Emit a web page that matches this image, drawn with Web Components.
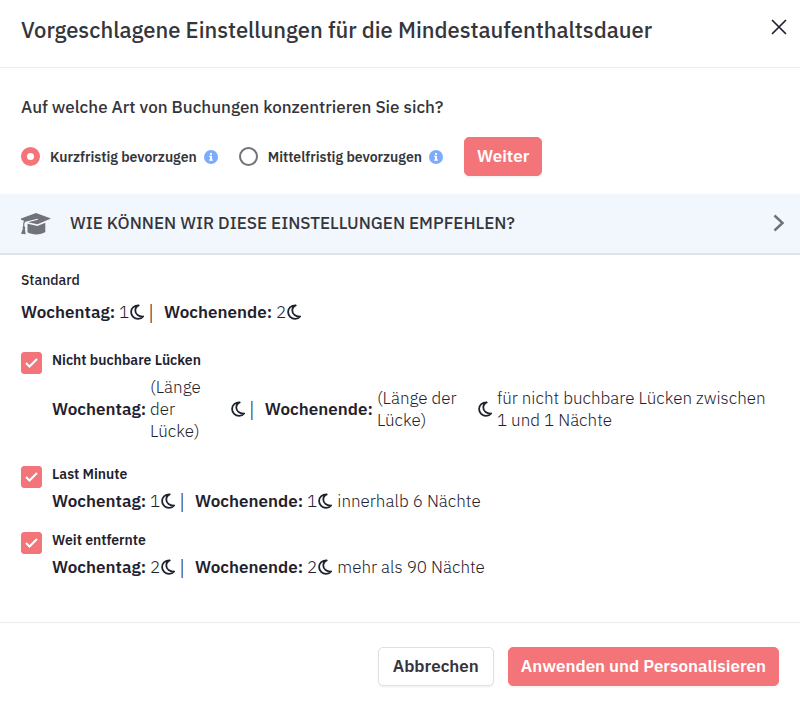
<!DOCTYPE html>
<html lang="de">
<head>
<meta charset="utf-8">
<meta name="viewport" content="width=device-width, initial-scale=1">
<title>Mindestaufenthaltsdauer</title>
<style>
  :root {
    --coral: #f47579;
    --grey: #727378;
    --ink: #35363b;
    --navy: #1f222e;
    --line: #ececed;
  }
  body {
    margin: 0;
    background: #fff;
    color: var(--ink);
    font: 16px/22px "IBM Plex Sans", Roboto, "Noto Sans", sans-serif;
  }
</style>
</head>
<body>
<stay-dialog>
  <span slot="title">Vorgeschlagene Einstellungen für die Mindestaufenthaltsdauer</span>
  <booking-focus></booking-focus>
  <info-banner>WIE KÖNNEN WIR DIESE EINSTELLUNGEN EMPFEHLEN?</info-banner>
  <rule-list>
    <stay-rule plain label="Standard" weekday="1" weekend="2"></stay-rule>
    <stay-rule wrap label="Nicht buchbare Lücken" weekday="(Länge der Lücke)" weekend="(Länge der Lücke)">für nicht buchbare Lücken zwischen 1 und 1 Nächte</stay-rule>
    <stay-rule label="Last Minute" weekday="1" weekend="1">innerhalb 6 Nächte</stay-rule>
    <stay-rule label="Weit entfernte" weekday="2" weekend="2">mehr als 90 Nächte</stay-rule>
  </rule-list>
  <action-button slot="actions">Abbrechen</action-button>
  <action-button slot="actions" primary>Anwenden und Personalisieren</action-button>
</stay-dialog>

<script>
class ActionButton extends HTMLElement {
  constructor() {
    super();
    this.attachShadow({ mode: "open" });
  }

  connectedCallback() {
    this.shadowRoot.innerHTML = `
      <style>
        :host { display: inline-block; flex: none; }
        button {
          display: block;
          padding: 8px 14px;
          border: 1px solid #dedfe1;
          border-radius: 5px;
          background: #fff;
          color: var(--ink);
          font: inherit;
          font-size: 17px;
          line-height: 21px;
          font-weight: 600;
          box-shadow: 0 2px 2px rgba(0, 0, 0, .04);
          cursor: pointer;
        }
        :host([primary]) button {
          padding: 8px 12px;
          border-color: var(--coral);
          background: var(--coral);
          color: #fff;
        }
      </style>
      <button type="button"><slot></slot></button>
    `;
  }
}

class InfoDot extends HTMLElement {
  constructor() {
    super();
    this.attachShadow({ mode: "open" });
    this.shadowRoot.innerHTML = `
      <style>
        :host { display: block; flex: none; width: 14px; height: 14px; }
        svg { display: block; }
      </style>
      <svg width="14" height="14" viewBox="0 0 14 14" aria-hidden="true">
        <circle cx="7" cy="7" r="7" fill="#7cacfb"/>
        <path d="M6 3h2v1.7H6zM5.2 5.7H8v3.8h.9v1.2H5.1V9.5H6V6.9h-.8z" fill="#fff"/>
      </svg>
    `;
  }
}

class MoonIcon extends HTMLElement {
  constructor() {
    super();
    this.attachShadow({ mode: "open" });
    this.shadowRoot.innerHTML = `
      <style>
        :host { display: block; flex: none; width: 14px; height: 16px; }
        svg { display: block; }
      </style>
      <svg width="14" height="16" viewBox="0 0 14 16" aria-hidden="true">
        <path d="M8.700 1.300C4.300 1.200 1.100 4.200 1.100 8c0 3.900 3.100 6.800 7 6.800 2.300 0 4-.9 5-2.300C8.800 12.800 5.300 10.300 5.300 6.500 5.300 4.200 6.600 2.200 8.700 1.300Z"
          fill="none" stroke="#1f222e" stroke-width="1.800" stroke-linejoin="round"/>
      </svg>
    `;
  }
}

class StayDialog extends HTMLElement {
  constructor() {
    super();
    this.attachShadow({ mode: "open" });
    this.shadowRoot.innerHTML = `
      <style>
        :host { display: block; }
        header {
          display: flex;
          justify-content: space-between;
          align-items: flex-start;
          padding: 16px 10px 23px 21px;
          border-bottom: 1px solid var(--line);
        }
        h1 {
          margin: 0;
          font-size: 22px;
          line-height: 28px;
          font-weight: 500;
        }
        .close {
          padding: 3px;
          border: 0;
          background: none;
          cursor: pointer;
        }
        svg { display: block; }
        footer {
          display: flex;
          justify-content: flex-end;
          gap: 14px;
          padding: 24px 21px 16px;
          border-top: 1px solid var(--line);
        }
      </style>
      <header>
        <h1><slot name="title"></slot></h1>
        <button class="close" type="button" aria-label="Schließen">
          <svg width="16" height="16" viewBox="0 0 16 16">
            <path d="M1.500 1.500l13 13M14.500 1.500l-13 13" stroke="#1f222e" stroke-width="1.700" stroke-linecap="round"/>
          </svg>
        </button>
      </header>
      <main><slot></slot></main>
      <footer><slot name="actions"></slot></footer>
    `;
  }
}

class BookingFocus extends HTMLElement {
  constructor() {
    super();
    this.attachShadow({ mode: "open" });
    this.shadowRoot.innerHTML = `
      <style>
        :host { display: block; padding: 28px 21px 18px; }
        fieldset { margin: 0; padding: 0; border: 0; min-width: 0; }
        legend {
          padding: 0;
          margin-bottom: 19px;
          font-size: 17px;
          font-weight: 500;
        }
        .choices { display: flex; align-items: center; flex-wrap: wrap; gap: 21px; }
        .choice { display: flex; align-items: center; gap: 7px; }
        label {
          display: flex;
          align-items: center;
          gap: 10px;
          font-size: 14px;
          font-weight: 600;
        }
        input {
          appearance: none;
          width: 19px;
          height: 19px;
          margin: 0;
          border: 2px solid var(--grey);
          border-radius: 50%;
          background: #fff;
        }
        input:checked { border: 6px solid var(--coral); }
      </style>
      <fieldset>
        <legend>Auf welche Art von Buchungen konzentrieren Sie sich?</legend>
        <div class="choices">
          <div class="choice">
            <label><input type="radio" name="focus" checked>Kurzfristig bevorzugen</label>
            <info-dot></info-dot>
          </div>
          <div class="choice">
            <label><input type="radio" name="focus">Mittelfristig bevorzugen</label>
            <info-dot></info-dot>
          </div>
          <action-button primary>Weiter</action-button>
        </div>
      </fieldset>
    `;
  }
}

class InfoBanner extends HTMLElement {
  constructor() {
    super();
    this.attachShadow({ mode: "open" });
    this.shadowRoot.innerHTML = `
      <style>
        :host { display: block; }
        button {
          display: flex;
          align-items: center;
          gap: 19px;
          width: 100%;
          padding: 14px 15px 15px 21px;
          border: 0;
          border-bottom: 2px solid #dfe2e7;
          background: #f2f7fe;
          color: var(--ink);
          font: inherit;
          font-size: 17px;
          font-weight: 500;
          text-align: left;
          cursor: pointer;
        }
        span { flex: 1; }
        svg { display: block; flex: none; }
      </style>
      <button type="button">
        <svg width="30" height="30" viewBox="0 0 30 30" fill="#727378" aria-hidden="true">
          <path d="M15 5L30 10.500 16.500 16.300 7 14.300 17 11.800 16.600 10.700 4.300 13.700C3.500 14.500 3.200 15.800 3.300 18.300 4.300 18.900 4.500 20 3.900 20.700L4.700 26.300 0 25.700 2 20.600C1.400 19.800 1.500 18.900 2.200 18.300 2.100 15.700 2.300 14 3 12.800L0 11.700V10.500Z"/>
          <path d="M6.500 15.700L16.500 17.900 24.300 14.700V24C20 27.200 11 27.200 6.500 24.300Z"/>
        </svg>
        <span><slot></slot></span>
        <svg width="12" height="18" viewBox="0 0 12 18" fill="none" aria-hidden="true">
          <path d="M1.500 1.500L9.500 9l-8 7.500" stroke="#727378" stroke-width="2.500"/>
        </svg>
      </button>
    `;
  }
}

class RuleList extends HTMLElement {
  constructor() {
    super();
    this.attachShadow({ mode: "open" });
    this.shadowRoot.innerHTML = `
      <style>
        :host {
          display: flex;
          flex-direction: column;
          gap: 15px;
          padding: 14px 21px 42px;
        }
      </style>
      <slot></slot>
    `;
  }
}

class StayRule extends HTMLElement {
  constructor() {
    super();
    this.attachShadow({ mode: "open" });
  }

  connectedCallback() {
    this.label = this.getAttribute("label") || "";
    this.weekday = this.getAttribute("weekday");
    this.weekend = this.getAttribute("weekend");
    this.plain = this.hasAttribute("plain");
    this.shadowRoot.innerHTML = this.render();
  }

  style() {
    return `:host {
              display: grid;
              grid-template-columns: 21px 1fr;
              column-gap: 10px;
              color: var(--navy);
            }
            :host([plain]) { grid-template-columns: 1fr; padding-bottom: 9px; }
            .box { display: grid; align-self: start; margin-top: 3px; }
            .box > * { grid-area: 1 / 1; }
            input {
              appearance: none;
              width: 21px;
              height: 22px;
              margin: 0;
              border-radius: 3px;
              border: 1px solid var(--coral);
            }
            input:checked { background: var(--coral); }
            .box svg { place-self: center; pointer-events: none; }
            .name { display: block; font-size: 14px; font-weight: 600; }
            :host([plain]) .name { font-weight: 500; }
            .values {
              display: flex;
              align-items: center;
              min-height: 26px;
              margin-top: 3px;
              font-size: 17px;
            }
            :host([plain]) .values { margin-top: 8px; }
            :host([wrap]) .values { padding: 2px 8px 6px 0; }
            b { flex: none; margin-right: 4px; font-weight: 600; }
            .value { margin-right: 1px; font-weight: 300; }
            :host([wrap]) .value { flex: 0 1 100px; }
            :host([wrap]) .weekday { flex-basis: 60px; margin-right: 21px; }
            .bar { padding: 2px 10px 0 4px; font-size: 20px; font-weight: 300; }
            .note { flex: 1; margin-left: 5px; font-weight: 300; }`;
  }

  render() {
    const tag = this.plain ? "div" : "label";
    const box = this.plain ? "" : `
      <span class="box">
        <input type="checkbox" id="active" checked>
        <svg width="13" height="10" viewBox="0 0 13 10" aria-hidden="true">
          <path d="M1 5l3.500 3.500L12 1" fill="none" stroke="#fff" stroke-width="2"/>
        </svg>
      </span>`;
    return `
      <style>${this.style()}</style>
      ${box}
      <div>
        <${tag} class="name" ${this.plain ? "" : `for="active"`}>${this.label}</${tag}>
        <div class="values">
          <b>Wochentag:</b>
          <span class="value weekday">${this.weekday}</span>
          <moon-icon></moon-icon>
          <span class="bar">|</span>
          <b>Wochenende:</b>
          <span class="value">${this.weekend}</span>
          <moon-icon></moon-icon>
          <span class="note"><slot></slot></span>
        </div>
      </div>
    `;
  }
}

customElements.define("action-button", ActionButton);
customElements.define("info-dot", InfoDot);
customElements.define("moon-icon", MoonIcon);
customElements.define("stay-dialog", StayDialog);
customElements.define("booking-focus", BookingFocus);
customElements.define("info-banner", InfoBanner);
customElements.define("rule-list", RuleList);
customElements.define("stay-rule", StayRule);
</script>
</body>
</html>
